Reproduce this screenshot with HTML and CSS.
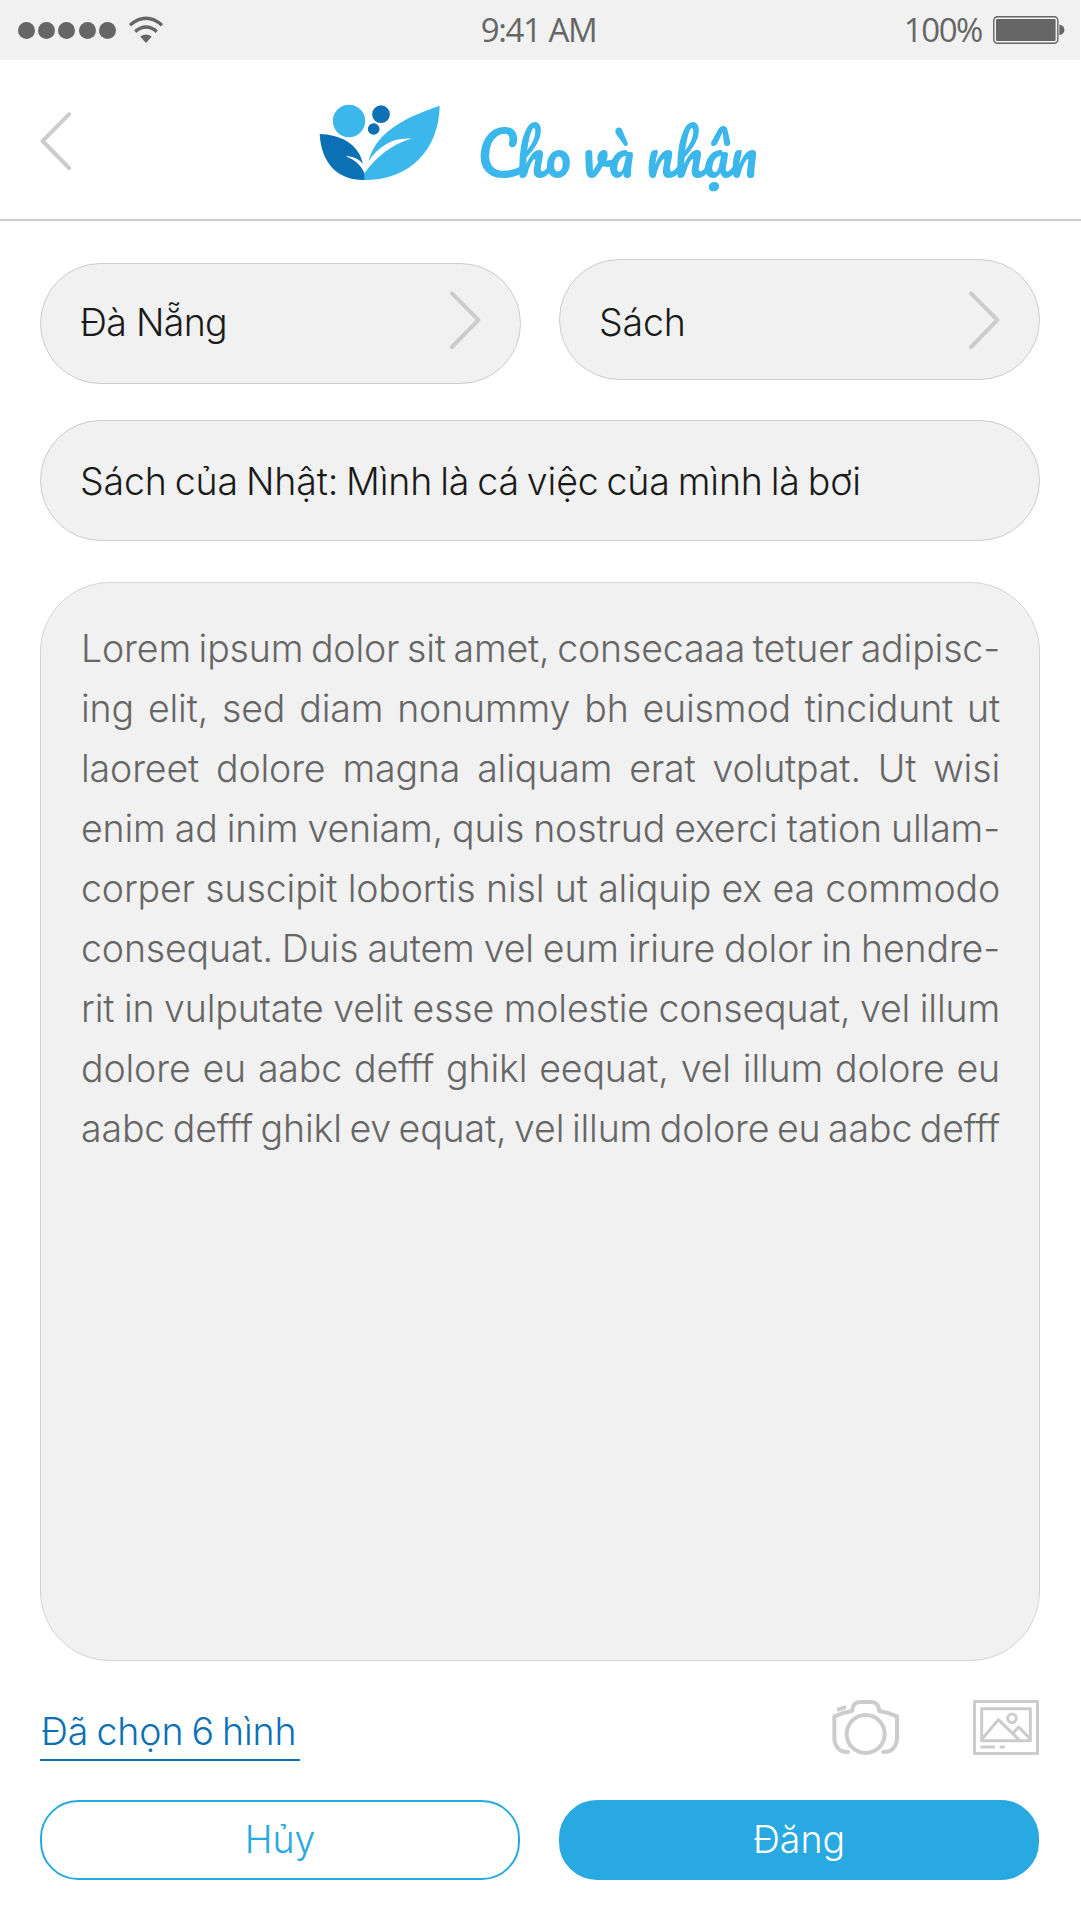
FILE: index.html
```html
<!DOCTYPE html>
<html lang="vi">
<head>
<meta charset="utf-8">
<title>Cho và nhận</title>
<link rel="stylesheet" href="styles.css">
</head>
<body>
<div class="status">
  <div class="status-left">
    <span class="dot"></span><span class="dot"></span><span class="dot"></span><span class="dot"></span><span class="dot"></span>
    <svg class="wifi" width="36" height="28" viewBox="0 0 36 28"><g fill="none" stroke="#666" stroke-width="3.4"><path d="M2 9.2Q18-4.6 34 9.2"/><path d="M7.2 15.6Q18 6.6 28.8 15.6"/></g><path d="M12.2 20.4Q18 16.8 23.8 20.4L18 27Z" fill="#666"/></svg>
  </div>
  <div class="status-time">9:41 AM</div>
  <div class="status-right">
    <span class="percent">100%</span>
    <svg width="72" height="28" viewBox="0 0 72 28"><rect x=".8" y=".8" width="64" height="26.4" rx="3.6" fill="none" stroke="#666" stroke-width="1.4"/><rect x="3" y="3" width="59.6" height="22" rx="1.2" fill="#666"/><path d="M66.3 8.6Q71.4 10 71.4 14Q71.4 18 66.3 19.2Z" fill="#666"/></svg>
  </div>
</div>
<header class="header">
  <svg class="back" width="32" height="60" viewBox="0 0 32 60"><path d="M29 3.4L2.6 30L29 57"/></svg>
  <svg class="logo" width="160" height="100" viewBox="0 0 480 300">
    <circle cx="147" cy="93" r="48.5" fill="#3bb7eb"/>
    <circle cx="243" cy="72.500" r="26.500" fill="#0b70b4"/>
    <circle cx="221" cy="117" r="17.500" fill="#0b70b4"/>
    <path d="M59 132C118 134 175 158 189 222C174 205 158 199 137 199C164 209 187 229 195 255V270C112 272 64 219 59 132Z" fill="#0b70b4"/>
    <path d="M419 47C417 176 333 270 193 270V250C226 203 272 164 333 146C281 141 235 168 206 214C223 139 292 89 419 47Z" fill="#3bb7eb"/>
  </svg>
  <h1 class="brand">Cho và nhận</h1>
</header>
<main class="form">
  <div class="selects">
    <div class="field select select-city"><span class="value">Đà Nẵng</span><svg class="chevron" width="32" height="60" viewBox="0 0 32 60"><path d="M3 3.400L29.400 30L3 57"/></svg></div>
    <div class="field select select-kind"><span class="value">Sách</span><svg class="chevron" width="32" height="60" viewBox="0 0 32 60"><path d="M3 3.400L29.400 30L3 57"/></svg></div>
  </div>
  <div class="field title">Sách của Nhật: Mình là cá việc của mình là bơi</div>
  <div class="body">
    <p>Lorem ipsum dolor sit amet, consecaaa tetuer adipisc-</p>
    <p>ing elit, sed diam nonummy bh euismod tincidunt ut</p>
    <p>laoreet dolore magna aliquam erat volutpat. Ut wisi</p>
    <p>enim ad inim veniam, quis nostrud exerci tation ullam-</p>
    <p>corper suscipit lobortis nisl ut aliquip ex ea commodo</p>
    <p>consequat. Duis autem vel eum iriure dolor in hendre-</p>
    <p>rit in vulputate velit esse molestie consequat, vel illum</p>
    <p>dolore eu aabc defff ghikl eequat, vel illum dolore eu</p>
    <p>aabc defff ghikl ev equat, vel illum dolore eu aabc defff</p>
  </div>
  <div class="attach">
    <a class="chosen">Đã chọn 6 hình</a>
    <div class="tools">
      <svg width="68" height="56" viewBox="0 0 204 168"><g fill="none" stroke="#ccc" stroke-width="12" stroke-linecap="round" stroke-linejoin="round"><circle cx="101" cy="102" r="57"/><path d="M48 156C22 157 7 137 7 115V49Q30 38 60 33C62 15 69 6 84 6H118C133 6 140 15 142 33Q172 38 195 49V115C195 137 180 157 154 156"/><path d="M20 28L37 23"/></g></svg>
      <svg width="66" height="56" viewBox="0 0 198 168"><g fill="none" stroke="#ccc" stroke-width="9" stroke-linecap="round" stroke-linejoin="round"><rect x="4.500" y="4.500" width="189" height="156"/><rect x="26" y="26" width="146" height="96"/><path d="M27 117L76 59L137 118M120 100L137 81L171 116M26 141H62M84 141H92"/><circle cx="117" cy="55" r="13"/></g></svg>
    </div>
  </div>
  <div class="actions">
    <button class="btn btn-cancel">Hủy</button>
    <button class="btn btn-post">Đăng</button>
  </div>
</main>
</body>
</html>
```
FILE: styles.css
```css
* { box-sizing: border-box; }
body {
  margin: 0;
  background: #fff;
  font-family: Inter, "Noto Sans", sans-serif;
  font-weight: 340;
  font-size: 37.5px;
  letter-spacing: -.15px;
  word-spacing: -2.4px;
  color: #1a1a1a;
}
.status {
  display: grid;
  grid-template-columns: 1fr auto 1fr;
  align-items: center;
  width: 1080px;
  height: 60px;
  padding: 0 15px 0 18px;
  background: #f1f1f1;
  color: #666;
  font: 450 33px/60px "Open Sans", sans-serif;
  letter-spacing: -1.4px;
  word-spacing: 1px;
}
.status-left { display: flex; align-items: center; gap: 3.2px; }
.dot { width: 17px; height: 17px; border-radius: 50%; background: #666; }
.wifi { margin-left: 9px; }
.status-time { margin-right: 6px; }
.status-right { display: flex; align-items: center; justify-content: flex-end; gap: 11px; }
.header {
  display: flex;
  align-items: flex-start;
  height: 161px;
  padding-left: 40px;
  border-bottom: 2px solid #ccc;
}
.back, .chevron { fill: none; stroke: #ccc; stroke-width: 4; stroke-linecap: round; stroke-linejoin: round; }
.back { margin-top: 51px; }
.logo { margin: 30px 0 0 228px; }
.brand {
  margin: 53px 0 0 17px;
  color: #3bb7eb;
  font: 400 60px/80px Pacifico, Lato, cursive;
  letter-spacing: 0;
  word-spacing: -4px;
  white-space: nowrap;
  transform: scaleX(.955);
  transform-origin: left;
}
.form { padding: 38px 41px 0 40px; }
.selects { display: grid; grid-template-columns: 481px 481px; justify-content: space-between; align-items: start; height: 161px; }
.field {
  display: flex;
  align-items: center;
  height: 121px;
  padding: 0 40px 0 39px;
  border: 1px solid #ccc;
  border-radius: 61px;
  background: #f1f1f1;
  white-space: nowrap;
}
.select { justify-content: space-between; padding: 0 39px; }
.select-city { margin-top: 4px; letter-spacing: -.7px; word-spacing: 0; }
.select-city .value { margin-top: -2px; }
.select-kind .value { margin-top: 6px; }
.select-city .chevron { margin-top: -7px; }
.title { padding-top: 2px; }
.body {
  height: 1079px;
  margin-top: 41px;
  padding: 36px 39px 0 40px;
  border: 1px solid #d4d4d4;
  border-radius: 70px;
  background: #f1f1f1;
  color: #666;
  word-spacing: -4px;
}
.body p { margin: 0; line-height: 60px; text-align: justify; text-align-last: justify; white-space: nowrap; }
.attach { display: flex; justify-content: space-between; height: 139px; padding-top: 39px; }
.chosen { width: 260px; height: 61px; padding-left: 1px; border-bottom: 2px solid #0b70b4; color: #0b70b4; letter-spacing: -.1px; line-height: 64px; white-space: nowrap; }
.tools { display: flex; gap: 73px; margin-right: 1px; }
.actions { display: flex; gap: 39px; }
.btn {
  width: 480px;
  height: 80px;
  padding: 0;
  border: 2px solid #29a9e1;
  border-radius: 38px;
  background: #fff;
  color: #29a9e1;
  font: inherit;
  line-height: 74px;
}
.btn-post { background: #29a9e1; color: #fff; }
```
